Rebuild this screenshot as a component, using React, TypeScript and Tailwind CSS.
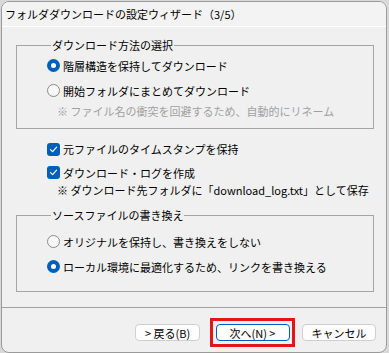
import React from "react";

const font = { fontFamily: '"Noto Sans CJK JP", "Noto Sans", sans-serif' };

function Radio({ checked }: { checked?: boolean }) {
    return checked ? (
        <span className="w-[13px] h-[13px] rounded-full bg-[#005fb8] flex items-center justify-center shrink-0">
            <span className="w-[5px] h-[5px] rounded-full bg-white" />
        </span>
    ) : (
        <span className="w-[13px] h-[13px] rounded-full border border-[#8a8a8a] bg-[#f7f7f7] shrink-0" />
    );
}

function Check() {
    return (
        <span className="w-[13px] h-[13px] rounded-[3px] bg-[#005fb8] flex items-center justify-center shrink-0">
            <svg width="9" height="9" viewBox="0 0 9 9" fill="none">
                <path d="M1.5 4.6 L3.6 6.6 L7.6 2.2" stroke="white" strokeWidth="1.2" strokeLinecap="round" strokeLinejoin="round" />
            </svg>
        </span>
    );
}

function Option({ label, checked, box }: { label: string; checked?: boolean; box?: boolean }) {
    return (
        <label className="flex items-center gap-[3px] h-[25px]">
            {box ? <Check /> : <Radio checked={checked} />}
            <span className="text-[11px] leading-[14px] text-black">{label}</span>
        </label>
    );
}

function Btn({ children, primary }: { children: React.ReactNode; primary?: boolean }) {
    return (
        <button
            className={`h-[17px] rounded-[4px] bg-[#fdfdfd] text-[11px] leading-[14px] text-black flex items-center justify-center border ${
                primary ? "w-[74px] border-[#005fb8]" : "border-[#cfcfcf]"
            }`}
        >
            {children}
        </button>
    );
}

export default function App() {
    return (
        <div className="w-[389px] h-[353px] bg-[#d9d9d9] pl-[1px] pt-[1px]" style={font}>
            <div className="w-[386px] h-[352px] border border-[#9a9a9a] rounded-[8px] bg-[#f0f0f0] overflow-hidden flex flex-col">
                {/* Title bar */}
                <div className="h-[25px] bg-[#f3f3f3] border-b border-white flex items-center px-[3px]">
                    <span className="text-[11px] leading-[14px] text-black">フォルダダウンロードの設定ウィザード（3/5）</span>
                </div>

                {/* Download method */}
                <fieldset className="mt-[11px] ml-[14px] w-[358px] border border-[#a5a5a5] pl-[30px] pb-[9px]">
                    <legend className="ml-[4px] px-[1px] text-[11px] leading-[14px] text-black">ダウンロード方法の選択</legend>
                    <div className="pt-[1px]">
                        <Option label="階層構造を保持してダウンロード" checked />
                        <Option label="開始フォルダにまとめてダウンロード" />
                        <div className="h-[16px] flex items-center pl-[10px] text-[11px] leading-[14px] text-[#a0a0a0]">
                            ※ ファイル名の衝突を回避するため、自動的にリネーム
                        </div>
                    </div>
                </fieldset>

                {/* Checkboxes */}
                <div className="mt-[8px] pl-[45px]">
                    <div className="h-[24px] flex items-center">
                        <Option label="元ファイルのタイムスタンプを保持" box />
                    </div>
                    <div className="h-[23px] flex items-center">
                        <Option label="ダウンロード・ログを作成" box />
                    </div>
                    <div className="h-[12px] flex items-center pl-[10px] text-[11px] leading-[12px] text-black">
                        ※ ダウンロード先フォルダに「download_log.txt」として保存
                    </div>
                </div>

                {/* Source rewriting */}
                <fieldset className="mt-[12px] ml-[14px] w-[358px] border border-[#a5a5a5] pl-[30px] pb-[12px]">
                    <legend className="ml-[4px] px-[1px] text-[11px] leading-[14px] text-black">ソースファイルの書き換え</legend>
                    <div className="pt-[7px]">
                        <Option label="オリジナルを保持し、書き換えをしない" />
                        <Option label="ローカル環境に最適化するため、リンクを書き換える" checked />
                    </div>
                </fieldset>

                <div className="mt-[15px] h-px bg-[#a0a0a0]" />

                {/* Buttons */}
                <div className="mt-[10px] flex items-center justify-end pr-[12px]">
                    <div className="w-[63px]">
                        <Btn>
                            <span className="w-[63px]">&gt; 戻る(B)</span>
                        </Btn>
                    </div>
                    <div className="ml-[12px] w-[85px] h-[29px] border-[3px] border-[#e5141b] flex items-center justify-center">
                        <Btn primary>次へ(N) &gt;</Btn>
                    </div>
                    <div className="ml-[7px] w-[72px]">
                        <Btn>
                            <span className="w-[72px]">キャンセル</span>
                        </Btn>
                    </div>
                </div>
            </div>
        </div>
    );
}
